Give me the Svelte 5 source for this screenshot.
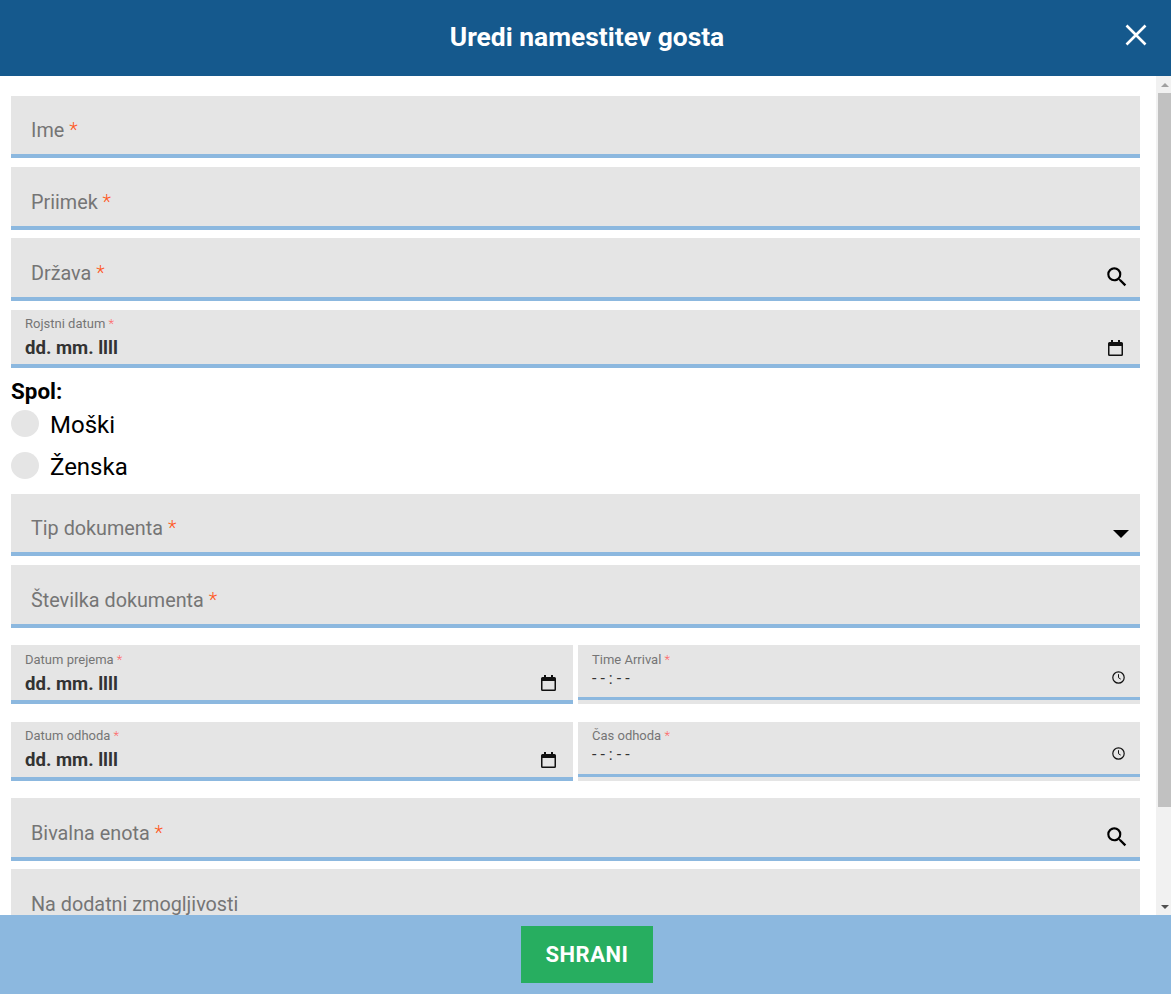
<script>
  const search = "M15.5 14h-.79l-.28-.27A6.471 6.471 0 0 0 16 9.5 6.5 6.5 0 1 0 9.5 16c1.61 0 3.09-.59 4.23-1.57l.27.28v.79l5 4.99L20.49 19l-4.99-5zm-6 0C7.01 14 5 11.99 5 9.5S7.01 5 9.5 5 14 7.01 14 9.5 11.99 14 9.5 14z";
</script>

{#snippet searchIcon()}
  <svg class="search" viewBox="0 0 24 24"><path d={search} /></svg>
{/snippet}

{#snippet calendar()}
  <svg class="calendar" viewBox="0 0 15 16">
    <path d="M3 0h2v2h5V0h2v2h1.5A1.5 1.5 0 0 1 15 3.5v11a1.5 1.5 0 0 1-1.5 1.5h-12A1.5 1.5 0 0 1 0 14.5v-11A1.5 1.5 0 0 1 1.5 2H3zM1.5 6v8.5h12V6z" fill-rule="evenodd" />
  </svg>
{/snippet}

{#snippet clock()}
  <svg class="clock" viewBox="0 0 13 13">
    <circle cx="6.5" cy="6.5" r="5.7" fill="none" stroke="#111" stroke-width="1.2" />
    <path d="M6.5 3.2v3.5l2.2 1.4" fill="none" stroke="#111" stroke-width="1" />
  </svg>
{/snippet}

{#snippet dateField(label)}
  <div class="field small">
    <span class="mini">{label} <em>*</em></span>
    <span class="date">dd. mm. llll</span>
    {@render calendar()}
  </div>
{/snippet}

{#snippet timeField(label)}
  <div class="time">
    <div class="field small inner">
      <span class="mini">{label} <em>*</em></span>
      <span class="dashes">--:--</span>
      {@render clock()}
    </div>
  </div>
{/snippet}

<div class="page">
  <header>
    <h1>Uredi namestitev gosta</h1>
    <svg class="close" viewBox="0 0 22 22">
      <path d="M1.5 1.5l19 19M20.5 1.5l-19 19" stroke="#fff" stroke-width="2.6" />
    </svg>
  </header>

  <div class="middle">
    <main>
      <div class="field"><span class="label">Ime <em>*</em></span></div>
      <div class="field"><span class="label">Priimek <em>*</em></span></div>
      <div class="field"><span class="label">Država <em>*</em></span>{@render searchIcon()}</div>
      {@render dateField("Rojstni datum")}

      <div class="spol">Spol:</div>
      <div class="radio"><span class="dot"></span>Moški</div>
      <div class="radio"><span class="dot"></span>Ženska</div>

      <div class="field doc"><span class="label">Tip dokumenta <em>*</em></span><span class="caret"></span></div>
      <div class="field"><span class="label">Številka dokumenta <em>*</em></span></div>

      <div class="row first">
        {@render dateField("Datum prejema")}
        {@render timeField("Time Arrival")}
      </div>
      <div class="row second">
        {@render dateField("Datum odhoda")}
        {@render timeField("Čas odhoda")}
      </div>

      <div class="field"><span class="label">Bivalna enota <em>*</em></span>{@render searchIcon()}</div>
      <div class="field"><span class="label">Na dodatni zmogljivosti</span></div>
    </main>
    <div class="scrollbar">
      <span class="up"></span>
      <div class="thumb"></div>
      <span class="down"></span>
    </div>
  </div>

  <footer>
    <button>SHRANI</button>
  </footer>
</div>

<style>
  :global(body) {
    margin: 0;
    font-family: Roboto, "Liberation Sans", sans-serif;
  }

  .page {
    display: flex;
    flex-direction: column;
    height: 994px;
    overflow: hidden;
  }

  header {
    position: relative;
    flex: 0 0 76px;
    display: flex;
    align-items: center;
    justify-content: center;
    background: #15598d;
    color: #fff;
  }

  h1 {
    margin: 0 0 2px 3px;
    font-size: 26.4px;
    font-weight: 700;
  }

  .close {
    position: absolute;
    right: 24px;
    top: 24px;
    width: 22px;
    height: 22px;
  }

  .middle {
    flex: 1;
    min-height: 0;
    display: flex;
    background: #fff;
  }

  main {
    flex: 1;
    min-width: 0;
    padding: 20px 16px 0 11px;
    overflow: hidden;
  }

  .scrollbar {
    flex: 0 0 15px;
    display: flex;
    flex-direction: column;
    align-items: center;
    background: #f1f1f1;
  }

  .thumb {
    align-self: flex-end;
    width: 13px;
    height: 714px;
    background: #c1c1c1;
  }

  .up, .down {
    flex: 0 0 17px;
    width: 0;
    box-sizing: border-box;
    border-left: 4px solid transparent;
    border-right: 4px solid transparent;
    margin-left: 2px;
  }

  .up {
    height: 0;
    flex-basis: 0;
    margin-top: 7px;
    margin-bottom: 6px;
    border-bottom: 4px solid #a0a0a0;
  }

  .down {
    height: 0;
    flex-basis: 0;
    margin-top: auto;
    margin-bottom: 6px;
    border-top: 4px solid #505050;
  }

  .field {
    position: relative;
    box-sizing: border-box;
    height: 62.4px;
    margin-bottom: 8.8px;
    padding: 23.4px 20px 0;
    background: #e5e5e5;
    border-bottom: 4px solid #8cb8df;
  }

  .label {
    display: block;
    font-size: 19.8px;
    line-height: 24px;
    color: #757575;
  }

  em {
    font-style: normal;
    font-weight: 300;
    color: #ff5722;
  }

  .small {
    height: 58px;
    margin-bottom: 0;
    padding: 7px 14px 0;
  }

  .row .small {
    height: 59px;
    padding-top: 8px;
  }

  .row.second .small {
    padding-top: 7px;
  }

  .mini {
    display: block;
    font-size: 13px;
    line-height: 14px;
    color: #757575;
  }

  .mini em {
    color: #f66;
  }

  .date {
    display: block;
    margin-top: 6px;
    font-size: 18.6px;
    line-height: 22px;
    font-weight: 700;
    color: #333;
  }

  .calendar {
    position: absolute;
    right: 17px;
    top: 30px;
    width: 15px;
    height: 16px;
    fill: #111;
  }

  .clock {
    position: absolute;
    right: 15px;
    top: 26px;
    width: 13px;
    height: 13px;
  }

  .row.second .clock {
    top: 25px;
  }

  .search {
    position: absolute;
    right: 10px;
    top: 26px;
    width: 26px;
    height: 26px;
    fill: #000;
  }

  .time {
    height: 59px;
    background: #e5e5e5;
  }

  .row .inner {
    height: 55px;
    border-bottom-width: 3px;
  }

  .dashes {
    display: block;
    margin-top: 2px;
    font-size: 16px;
    line-height: 20px;
    letter-spacing: 4px;
    color: #333;
  }

  .spol {
    margin-top: 11px;
    font-size: 22.4px;
    line-height: 25px;
    font-weight: 700;
    color: #000;
  }

  .radio {
    display: flex;
    align-items: center;
    gap: 11px;
    height: 42px;
    font-size: 24px;
    color: #000;
  }

  .dot {
    width: 28px;
    height: 27px;
    margin-bottom: 3px;
    border-radius: 50%;
    background: #e5e5e5;
  }

  .doc {
    margin-top: 6.4px;
  }

  .caret {
    position: absolute;
    right: 11px;
    top: 36px;
    width: 0;
    height: 0;
    border-left: 8px solid transparent;
    border-right: 8px solid transparent;
    border-top: 8px solid #000;
  }

  .row {
    display: grid;
    grid-template-columns: 1fr 1fr;
    gap: 5px;
    margin-bottom: 18px;
  }

  .row.first {
    margin-top: 17px;
  }

  .row.second {
    margin-bottom: 17.6px;
  }

  footer {
    flex: 0 0 79px;
    display: flex;
    justify-content: center;
    padding: 11px 0 0 3px;
    box-sizing: border-box;
    background: #8cb8df;
  }

  button {
    width: 132px;
    height: 57px;
    border: 0;
    background: #27ae60;
    color: #fff;
    font-family: inherit;
    font-size: 22px;
    font-weight: 700;
    letter-spacing: 0.5px;
  }
</style>
